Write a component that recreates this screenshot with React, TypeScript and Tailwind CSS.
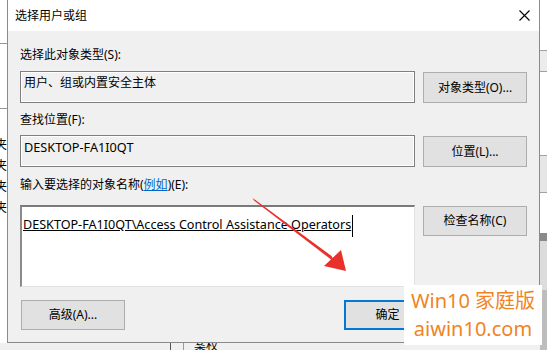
const FONT = "font-['Noto_Sans','Noto_Sans_CJK_SC',sans-serif]";

function Btn({ label, className = "" }: { label: React.ReactNode; className?: string }) {
  return (
    <div
      className={`flex items-center justify-center border border-[#adadad] bg-[#e1e1e1] text-[12px] leading-4 text-black ${className}`}
    >
      {label}
    </div>
  );
}

function ReadBox({ text, latin = false }: { text: string; latin?: boolean }) {
  return (
    <div
      className={`h-[32px] w-[395px] border border-[#7f7f7f] bg-[#f0f0f0] pl-[3px] pt-[3px] leading-4 shadow-[inset_0_0_0_1px_#ffffff] ${
        latin ? "text-[12.7px]" : "text-[12px]"
      }`}
    >
      {text}
    </div>
  );
}

export default function App() {
  return (
    <div className={`relative h-[350px] w-[547px] overflow-hidden bg-white text-black ${FONT}`}>
      {/* stuff behind the dialog */}
      <div className="absolute left-0 top-[43px] h-px w-[8px] bg-[#9a9a9a]" />
      <div className="absolute left-0 top-[108px] h-px w-[8px] bg-[#9a9a9a]" />
      <div className="absolute left-[-5px] top-[134px] flex flex-col text-[12px] leading-[21px]">
        <span>夹</span>
        <span>夹</span>
        <span>夹</span>
        <span>夹</span>
      </div>
      <div className="absolute left-0 top-[343px] h-[7px] w-[547px] bg-[#f0f0f0]">
        <div className="absolute left-[170px] top-0 h-full w-px bg-[#555]" />
        <div className="absolute left-[183px] top-0 h-full w-px bg-[#9a9a9a]" />
        <span className="absolute left-[194px] top-[-5px] text-[12px] leading-4">案权</span>
      </div>
      <div className="absolute left-[540px] top-0 flex h-[350px] w-[7px] flex-col">
        <div className="h-[50px] bg-white" />
        <div className="h-[22px] border-y border-[#a0a0a0] bg-[#ececec]" />
        <div className="h-[83px] bg-white" />
        <div className="h-[38px] border-y border-[#a0a0a0] bg-[#e6e6e6]" />
        <div className="h-[40px] bg-white" />
        <div className="h-[8px] bg-[#8a8a8a]" />
        <div className="h-[49px] bg-[#dcdcdc]" />
        <div className="flex-1 bg-[#bdbdbd]" />
      </div>

      {/* dialog */}
      <div className="absolute left-[7px] top-[-1px] flex h-[344px] w-[533px] flex-col border border-[#8a8a8a] bg-[#f0f0f0]">
        <div className="flex h-[31px] items-center justify-between bg-white pl-[7px] pr-[9px]">
          <span className="text-[12px] leading-4">选择用户或组</span>
          <svg width="11" height="11" viewBox="0 0 11 11">
            <path d="M0.5 0.5 L10.5 10.5 M10.5 0.5 L0.5 10.5" stroke="#000" strokeWidth="1.1" />
          </svg>
        </div>

        <div className="flex flex-col pl-[12px] pt-[16px] text-[12px] leading-4">
          <div>选择此对象类型(S):</div>
          <div className="mt-[8px] flex items-start gap-2">
            <ReadBox text="用户、组或内置安全主体" />
            <Btn label="对象类型(O)..." className="mt-px h-[31px] w-[104px]" />
          </div>

          <div className="mt-[9px]">查找位置(F):</div>
          <div className="mt-[7px] flex items-start gap-2">
            <ReadBox text="DESKTOP-FA1I0QT" latin />
            <Btn label="位置(L)..." className="mt-px h-[31px] w-[104px]" />
          </div>

          <div className="mt-[10px]">
            输入要选择的对象名称(<span className="text-[#0066cc] underline">例如</span>)(E):
          </div>
          <div className="mt-[12px] flex items-start gap-2">
            <div className="h-[82px] w-[395px] border-b border-l-2 border-r border-t-2 border-b-[#e3e3e3] border-l-[#8a8a8a] border-r-[#e3e3e3] border-t-[#7a7a7a] bg-white pl-px pt-[8px] text-[12.6px]">
              <span className="underline">DESKTOP-FA1I0QT\Access Control Assistance Operators</span>
              <span className="ml-px inline-block h-[22px] w-px bg-black align-middle" />
            </div>
            <Btn label="检查名称(C)" className="mt-px h-[30px] w-[104px]" />
          </div>

          <div className="mt-[13px] flex items-start pr-[12px]">
            <Btn label="高级(A)..." className="ml-px h-[30px] w-[104px]" />
            <div className="flex-1" />
            <div className="flex h-[30px] w-[87px] items-center justify-center border-2 border-[#0078d7] bg-[#e1e1e1]">
              确定
            </div>
            <Btn label="取消" className="ml-2 h-[30px] w-[88px]" />
          </div>
        </div>
      </div>

      {/* red arrow */}
      <svg className="absolute left-0 top-0" width="547" height="350" viewBox="0 0 547 350">
        <polygon points="252.5,198 254,200.5 335,262.5 331.5,256" fill="#e8312b" />
        <polygon points="324,266 341,250 346,271" fill="#e8312b" />
      </svg>

      {/* watermark */}
      <div className="absolute left-[404px] top-[285px] flex h-[60px] w-[138px] flex-col items-center justify-center bg-white text-[20px] leading-[28px] text-[#ef8423]">
        <span>Win10 家庭版</span>
        <span>aiwin10.com</span>
      </div>
    </div>
  );
}
